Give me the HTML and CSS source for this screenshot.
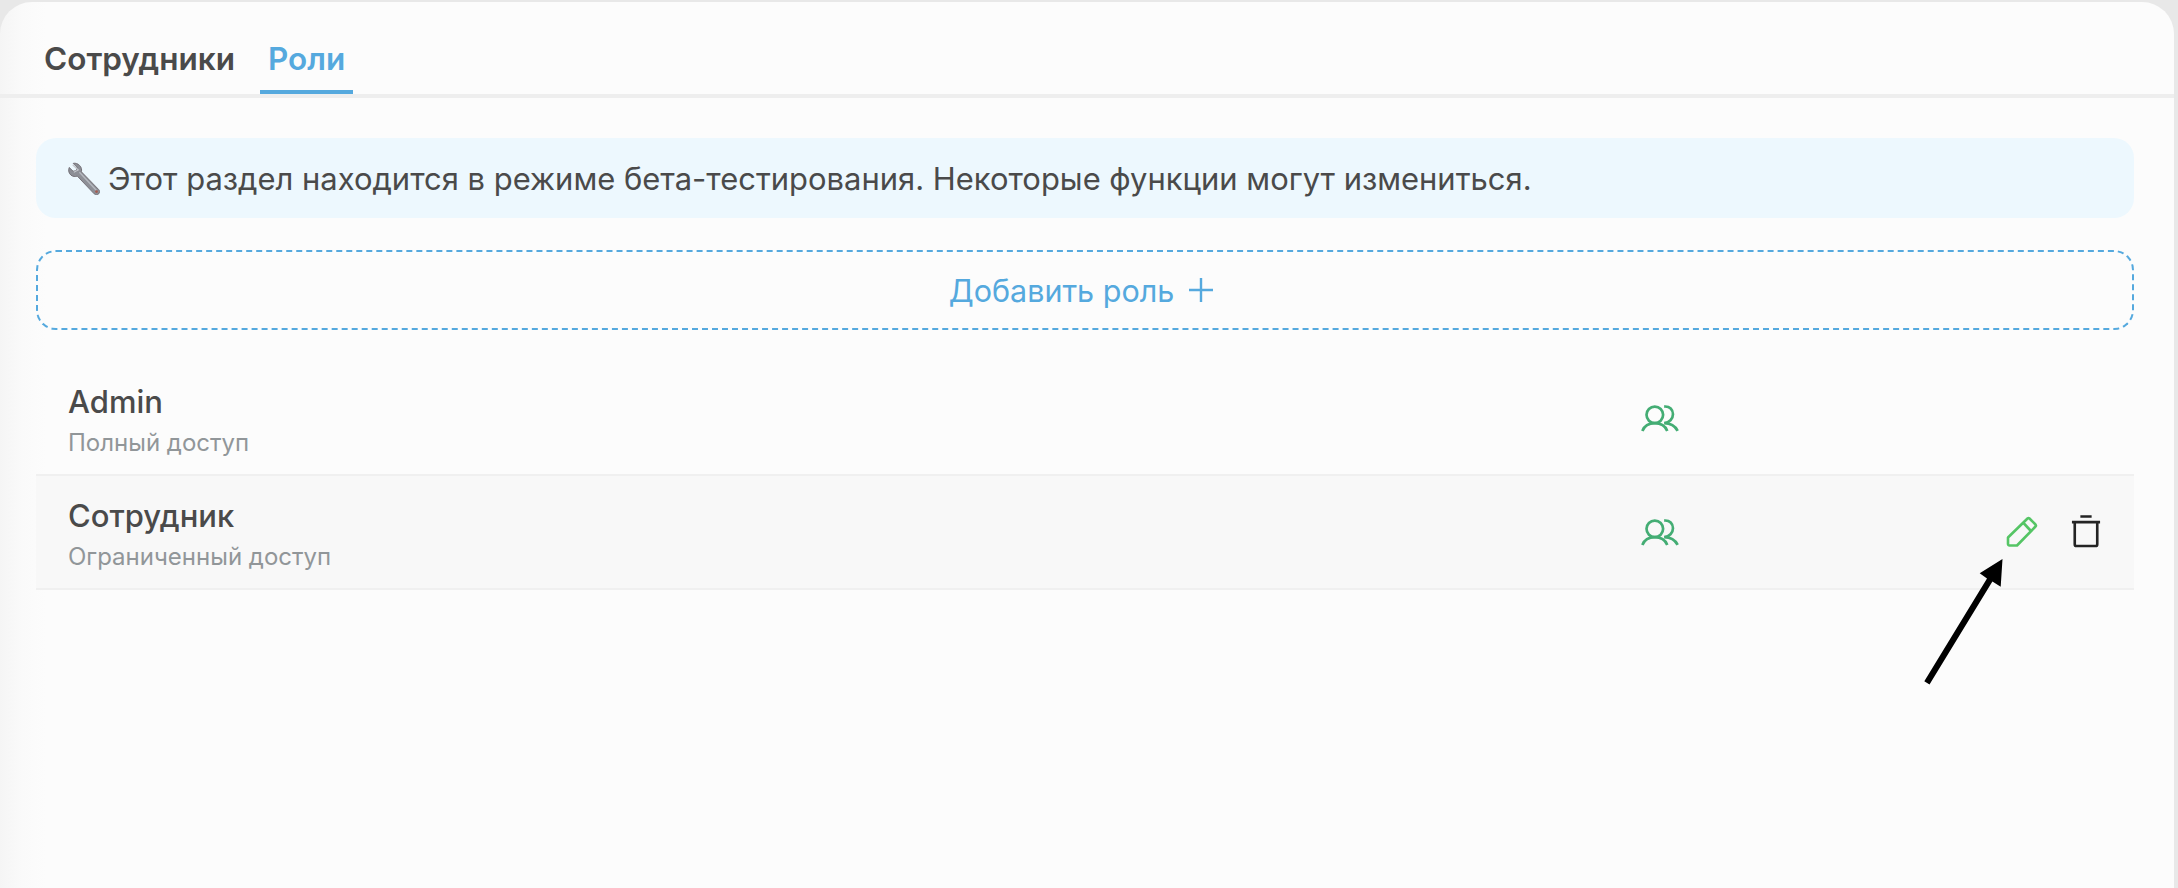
FILE: index.html
```html
<!DOCTYPE html>
<html lang="ru">
<head>
<meta charset="utf-8">
<title>Роли</title>
<link rel="stylesheet" href="styles.css">
</head>
<body>
<main class="card">
  <nav class="tabs">
    <a class="tab">Сотрудники</a>
    <a class="tab tab-active">Роли</a>
  </nav>
  <section class="content">
    <div class="notice">
      <svg class="wrench" viewBox="2 2 28 29" width="32" height="33" aria-hidden="true">
        <path d="M6.500 3.200 9.800 6.600l-.4 3-3 .5L3 6.800C2 9.400 2.600 12 4.600 13.600c1.700 1.300 3.700 1.500 5.500.8L25 30c1.100 1.100 3 1.100 4-.1 1-1.100.9-2.800-.2-3.800L13.700 10.600c.5-2 0-4.100-1.600-5.600C10.700 3.500 8.500 2.700 6.500 3.200Z" fill="#8d8f96" stroke="#6e6a70" stroke-width=".8"/>
        <path d="M6 4.500 11 9 7 11" fill="none" stroke="#c3c6cc" stroke-width="1"/>
        <path d="M12 11 27 27" fill="none" stroke="#b5b8bf" stroke-width="1.200"/>
        <circle cx="27" cy="28" r="1.200" fill="#a35b50"/>
      </svg>
      <span>Этот раздел находится в режиме бета-тестирования. Некоторые функции могут измениться.</span>
    </div>
    <button class="add-role" type="button">
      <span>Добавить роль</span>
      <svg viewBox="0 0 24 24" width="24" height="24" aria-hidden="true"><path d="M12 0v24M0 12h24" fill="none" stroke="currentColor" stroke-width="2.400"/></svg>
    </button>
    <ul class="roles">
      <li class="role">
        <div class="role-text">
          <div class="role-name">Admin</div>
          <div class="role-desc">Полный доступ</div>
        </div>
        <svg class="users" viewBox="0 0 36 26" width="38" height="27" aria-hidden="true">
          <circle cx="13" cy="9.500" r="8" />
          <path d="M1 25c2-5 6.500-7.500 12-7.500S23 20 25 25M22 1.500c5.500-.5 8.500 3 8.500 7.500 0 4.500-3.500 8-8.500 8.500 5.500 0 10.500 2.500 13 7.500"/>
        </svg>
        <div class="actions"></div>
      </li>
      <li class="role role-hover">
        <div class="role-text">
          <div class="role-name">Сотрудник</div>
          <div class="role-desc">Ограниченный доступ</div>
        </div>
        <svg class="users" viewBox="0 0 36 26" width="38" height="27" aria-hidden="true">
          <circle cx="13" cy="9.500" r="8" />
          <path d="M1 25c2-5 6.500-7.500 12-7.500S23 20 25 25M22 1.500c5.500-.5 8.500 3 8.500 7.500 0 4.500-3.500 8-8.500 8.500 5.500 0 10.500 2.500 13 7.500"/>
        </svg>
        <div class="actions">
          <svg class="pencil" viewBox="0 0 32 32" width="32" height="32" aria-hidden="true">
            <path d="M2 21.500 21.500 2.500a1.500 1.500 0 0 1 2 0l6 6a1.500 1.500 0 0 1 0 2L11 29.500 H3.500a1.500 1.500 0 0 1-1.500-1.500Z"/>
            <path d="M17.500 7 24.500 14.500"/>
          </svg>
          <svg class="trash" viewBox="0 0 32 34" width="30" height="34" aria-hidden="true">
            <path d="M10 1.500h12M1 7.500h30M4 7.500V31a2 2 0 0 0 2 2h20a2 2 0 0 0 2-2V7.500"/>
          </svg>
        </div>
      </li>
    </ul>
  </section>
  <svg class="arrow" viewBox="0 0 90 130" width="90" height="130" aria-hidden="true">
    <path d="M82.500 1 80.700 28.700 72.400 23.500 9.500 126.500 4.300 123.200 67 20.500 59.700 15.300 Z" fill="#000"/>
  </svg>
</main>
</body>
</html>
```
FILE: styles.css
```css
* { box-sizing: border-box; }
html, body { margin: 0; height: 100%; }
body {
  background: #e8e8e8;
  padding: 2px 4px 0 0;
  font-family: Inter, "Noto Sans", sans-serif;
  color: #4a4a4a;
  overflow: hidden;
}
.card {
  position: relative;
  height: 886px;
  border-radius: 32px 32px 0 0;
  background: linear-gradient(90deg, #f5f5f5 0, #fafafa 22px, #fcfcfc 46px);
  overflow: hidden;
}
.tabs {
  display: flex;
  height: 96px;
  padding: 0 0 0 36px;
  border-bottom: 4px solid #eeeeee;
}
.tab {
  height: 92px;
  padding: 39px 8px 0;
  font-size: 31.500px;
  line-height: 36px;
  font-weight: 600;
}
.tab-active {
  margin-left: 17px;
  color: #55a9de;
  border-bottom: 4px solid #55a9de;
}
.content { padding: 40px 40px 0 36px; }
.notice {
  display: flex;
  align-items: center;
  gap: 8px;
  height: 80px;
  padding-left: 32px;
  border-radius: 20px;
  background: #edf8fe;
  font-size: 30.950px;
}
.wrench { flex: none; }
.add-role {
  display: flex;
  align-items: center;
  justify-content: center;
  gap: 15px;
  width: 100%;
  height: 80px;
  margin-top: 32px;
  padding: 0 8px 0 0;
  border: 2px dashed #55a9de;
  border-radius: 20px;
  background: transparent;
  color: #55a9de;
  font-family: inherit;
  font-size: 30.500px;
}
.roles { list-style: none; margin: 32px 0 0; padding: 0; }
.role {
  display: flex;
  align-items: center;
  height: 114px;
  padding-left: 32px;
  border-bottom: 2px solid #f0f0f0;
}
.role-hover { background: #f8f8f8; }
.role-text { width: 1573px; padding-top: 5px; }
.role-name { font-size: 31px; line-height: 40px; font-weight: 500; }
.role-desc { margin-top: 5px; font-size: 24px; line-height: 32px; color: #919699; }
.users { flex: none; fill: none; stroke: #44ad74; stroke-width: 2.600; }
.actions {
  display: flex;
  align-items: center;
  gap: 33px;
  margin-left: 327px;
}
.pencil { fill: none; stroke: #55c565; stroke-width: 2.600; stroke-linejoin: round; }
.trash { margin-top: -3px; fill: none; stroke: #242424; stroke-width: 2.800; }
.arrow { position: absolute; left: 1920px; top: 556px; }
```
